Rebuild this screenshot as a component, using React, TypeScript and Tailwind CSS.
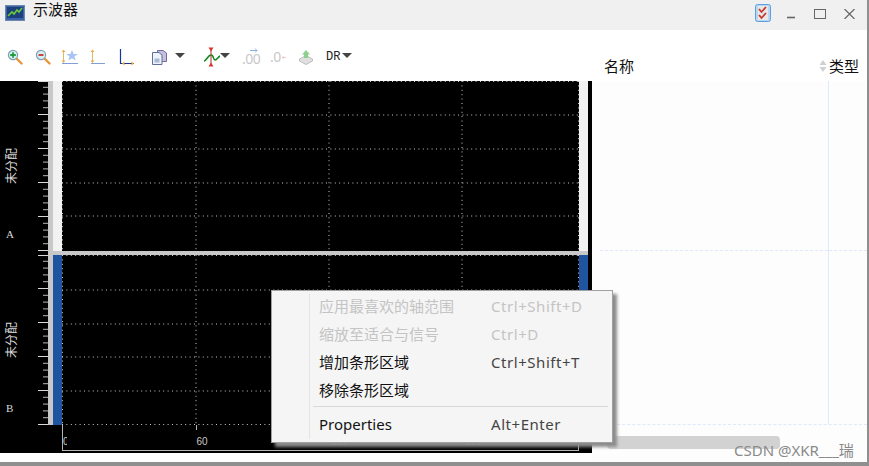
import React from 'react';

const CJK = "font-['Segoe_UI','Noto_Sans','Noto_Sans_CJK_SC',sans-serif]";

const Magnifier = ({ minus }: { minus?: boolean }) => (
    <svg width="16" height="16" viewBox="0 0 16 16">
        <path d="M9.5 9.5L14.5 14.5" stroke="#e8953a" strokeWidth="2.4" strokeLinecap="round" />
        <circle cx="6" cy="6" r="4.6" fill="#d8eef5" stroke="#7f9fae" strokeWidth="1.2" />
        {minus ? (
            <path d="M3.5 6H8.5" stroke="#c8322b" strokeWidth="1.8" />
        ) : (
            <path d="M3.2 6H8.8M6 3.2V8.8" stroke="#1f9e3c" strokeWidth="1.8" />
        )}
    </svg>
);

const AxisStar = () => (
    <svg width="18" height="16" viewBox="0 0 18 16">
        <path d="M2.5 1V13" stroke="#e5b765" strokeWidth="1" />
        <path d="M0.5 3L2.5 0.5L4.5 3ZM0.5 11.5L2.5 14L4.5 11.5Z" fill="#e9b04f" />
        <path d="M1 14.5H17" stroke="#7f9fd6" strokeWidth="1" />
        <path d="M11 1L12.6 5H16.8L13.4 7.6L14.7 11.6L11 9.2L7.3 11.6L8.6 7.6L5.2 5H9.4Z" fill="#a9c4f2" />
    </svg>
);

const AxisY = () => (
    <svg width="16" height="16" viewBox="0 0 16 16">
        <path d="M3.5 1V13" stroke="#e5b765" strokeWidth="1" />
        <path d="M1.5 3L3.5 0.5L5.5 3ZM1.5 11.5L3.5 14L5.5 11.5Z" fill="#e9b04f" />
        <path d="M2 14.5H16" stroke="#7f9fd6" strokeWidth="1" />
    </svg>
);

const AxisX = () => (
    <svg width="16" height="17" viewBox="0 0 16 17">
        <path d="M1.5 0V14.5H7" stroke="#17349c" strokeWidth="1.2" fill="none" />
        <path d="M4 14.5H15" stroke="#17349c" strokeWidth="1" />
        <path d="M5.5 12.5L3 14.5L5.5 16.5ZM12.5 12.5L15 14.5L12.5 16.5Z" fill="#e9a92c" />
    </svg>
);

const Copy = () => (
    <svg width="15" height="15" viewBox="0 0 15 15">
        <path d="M5.5 0.5H11L14.5 3V11.5H5.5Z" fill="#c6bfe0" stroke="#75689f" />
        <path d="M0.5 2.5H7L10 5V14.5H0.5Z" fill="#eef2fa" stroke="#5d7194" />
        <rect x="2.5" y="8.5" width="5" height="4" fill="#a9b9d4" />
    </svg>
);

const Caret = () => (
    <svg width="10" height="5" viewBox="0 0 10 5">
        <path d="M0 0H10L5 5Z" fill="#444" />
    </svg>
);

const Signal = () => (
    <svg width="16" height="20" viewBox="0 0 16 20">
        <path d="M0 14C3 13 4 8 7 8C10 8 9 13 11 13C13 13 14 10 16 9" stroke="#14861f" strokeWidth="1.6" fill="none" />
        <path d="M7 3V17" stroke="#a33" strokeWidth="1" />
        <path d="M4.5 0.5H9.5L7 4.5ZM4.5 19.5H9.5L7 15.5Z" fill="#d8342a" />
    </svg>
);

const Stack = () => (
    <svg width="14" height="15" viewBox="0 0 14 15">
        <path d="M0.5 9L7 5.5L13.5 9V11L7 14.5L0.5 11Z" fill="#e0e0e0" stroke="#bdbdbd" />
        <path d="M7 0L11 4.5H9V8H5V4.5H3Z" fill="#8fd08f" />
    </svg>
);

const Ruler = () => {
    const ticks = Array.from({ length: 26 }, (_, i) => i * 6.8);
    return (
        <svg width="10" height="170" viewBox="0 0 10 170" className="shrink-0">
            {ticks.map((t, i) => (
                <path
                    key={i}
                    d={`M${i % 5 === 0 ? 0 : 5} ${t - 0.5 + (i === 0 ? 1 : 0)}H10`}
                    stroke={i % 5 === 0 ? '#d8d8d8' : '#b8b8b8'}
                    strokeWidth="1"
                />
            ))}
        </svg>
    );
};

// grid lines sit at the same spots in both lanes, only offset vertically
const Grid = ({ rows }: { rows: number[] }) => (
    <svg width="517" height="170" viewBox="0 0 517 170" className="shrink-0">
        {rows.map((y) => (
            <path key={y} d={`M0 ${y}H517`} stroke="#c8c8c8" strokeWidth="1" strokeDasharray="1 3.4" />
        ))}
        {[0.5, 134, 267, 400, 516.5].map((x) => (
            <path key={x} d={`M${x} 0V170`} stroke="#c8c8c8" strokeWidth="1" strokeDasharray="1 3.4" />
        ))}
    </svg>
);

const Lane = ({ letter, strip, rows }: { letter: string; strip: string; rows: number[] }) => (
    <div className="flex h-[170px]">
        <div className="relative w-[38px] shrink-0 text-[12px] text-[#d8d8d8] font-['Noto_Sans_CJK_SC',sans-serif]">
            <span className="absolute -left-[9px] top-[75px] w-[40px] -rotate-90 whitespace-nowrap text-center leading-[20px]">未分配</span>
            <span className="absolute left-[6px] bottom-[11px] font-['Liberation_Serif',serif] text-[11px] leading-[12px]">{letter}</span>
        </div>
        <Ruler />
        <div className="w-[5px] shrink-0 bg-[#c8c8c8]" />
        <div className={`w-[9px] shrink-0 ${strip}`} />
        <Grid rows={rows} />
        <div className={`w-[9px] shrink-0 ${strip}`} />
    </div>
);

const AxisLabel = ({ text, width, indent }: { text: string; width: string; indent: string }) => (
    <span className={`relative pt-[12px] leading-none ${width} ${indent}`}>
        <span className="absolute left-0 top-0 h-[5px] w-px bg-[#b4b4b4]" />
        {text}
    </span>
);

const menuItems = [
    { label: '应用最喜欢的轴范围', keys: 'Ctrl+Shift+D', off: true },
    { label: '缩放至适合与信号', keys: 'Ctrl+D', off: true },
    { label: '增加条形区域', keys: 'Ctrl+Shift+T' },
    { label: '移除条形区域', keys: '' },
];

const MenuRow = ({ label, keys, off }: { label: string; keys: string; off?: boolean }) => (
    <div className={`flex h-[28px] items-center pl-[47px] text-[15px] ${off ? 'text-[#c4c4c4]' : 'text-[#111]'}`}>
        <span className="w-[172px] shrink-0">{label}</span>
        <span className={`tracking-[0.55px] ${off ? '' : 'text-[#444]'}`}>{keys}</span>
    </div>
);

export default function App() {
    return (
        <div className={`relative flex h-[466px] w-[869px] flex-col overflow-hidden border-r-2 border-b-4 border-[#8f8f8f] bg-white ${CJK}`}>
            {/* Title bar */}
            <div className="flex h-[30px] shrink-0 items-start bg-[#f0f0f0]">
                <svg width="20" height="16" viewBox="0 0 20 16" className="ml-[5px] mt-[5px]">
                    <rect x="0.5" y="0.5" width="19" height="15" fill="#3a64a8" stroke="#6d87b0" />
                    <rect x="2" y="2" width="16" height="11" fill="#1d3f7a" />
                    <path d="M3 11L7 7L9 9L12 5L14 7L17 3" stroke="#6ccb3c" strokeWidth="1.6" fill="none" />
                </svg>
                <span className="ml-[8px] mt-[1px] text-[15px] leading-[17px] text-[#111]">示波器</span>
                <svg width="16" height="18" viewBox="0 0 16 18" className="ml-auto mt-[4px]">
                    <rect x="0.5" y="0.5" width="15" height="17" rx="2" fill="#b9d6f2" stroke="#5da0dd" />
                    <rect x="3" y="2" width="10" height="14" fill="#e8e8e8" />
                    <path d="M4 5L6.5 8L11 3M4 11L6.5 14L11 9" stroke="#c9382d" strokeWidth="1.8" fill="none" />
                </svg>
                <svg width="10" height="10" viewBox="0 0 10 10" className="ml-[15px] mt-[9px]">
                    <path d="M1 8.5H9" stroke="#666" strokeWidth="1.6" />
                </svg>
                <svg width="12" height="10" viewBox="0 0 12 10" className="ml-[18px] mt-[9px]">
                    <rect x="0.5" y="0.5" width="11" height="9" fill="none" stroke="#666" />
                </svg>
                <svg width="11" height="10" viewBox="0 0 11 10" className="ml-[18px] mr-[12px] mt-[9px]">
                    <path d="M0.5 0L10.5 10M10.5 0L0.5 10" stroke="#666" strokeWidth="1.2" />
                </svg>
            </div>

            <div className="flex min-h-0 flex-1">
                {/* Left: toolbar and scope */}
                <div className="flex w-[592px] shrink-0 flex-col">
                    <div className="flex h-[51px] shrink-0 items-center pl-[7px] pt-[3px]">
                        <Magnifier />
                        <div className="ml-[12px]"><Magnifier minus /></div>
                        <div className="ml-[10px]"><AxisStar /></div>
                        <div className="ml-[10px]"><AxisY /></div>
                        <div className="ml-[14px]"><AxisX /></div>
                        <div className="ml-[17px]"><Copy /></div>
                        <div className="ml-[8px] mb-[3px]"><Caret /></div>
                        <div className="ml-[19px]"><Signal /></div>
                        <div className="mb-[3px]"><Caret /></div>
                        <div className="ml-[12px] flex w-[16px] flex-col items-end">
                            <svg width="8" height="5" viewBox="0 0 8 5" className="-mb-[1px]">
                                <path d="M0 2.5H7M5 0.5L7 2.5L5 4.5" stroke="#8fb0e6" strokeWidth="1" fill="none" />
                            </svg>
                            <span className="w-[16px] whitespace-nowrap text-[14px] leading-[14px] tracking-[-0.5px] text-[#c8c8c8]">.00</span>
                        </div>
                        <div className="ml-[12px] flex w-[16px] items-center">
                            <span className="text-[14px] leading-[14px] tracking-[-0.5px] text-[#c8c8c8]">.0</span>
                            <svg width="6" height="5" viewBox="0 0 6 5" className="ml-[1px]">
                                <path d="M6 2.5H0.5M2.5 0.5L0.5 2.5L2.5 4.5" stroke="#f2b0b0" strokeWidth="1" fill="none" />
                            </svg>
                        </div>
                        <div className="ml-[13px]"><Stack /></div>
                        <span className="ml-[13px] font-['Liberation_Mono',monospace] text-[12px] leading-none text-[#222]">DR</span>
                        <div className="ml-[2px] mb-[3px]"><Caret /></div>
                    </div>

                    <div className="flex-1 bg-black">
                        <Lane letter="A" strip="bg-[#f2f2f2]" rows={[0.5, 34, 68, 102, 135]} />
                        <div className="ml-[48px] h-[4px] w-[540px] bg-[#c8c8c8]" />
                        <Lane letter="B" strip="bg-[#1f559f]" rows={[0.5, 35, 69, 102, 136, 169.5]} />
                        <div className="ml-[62px] flex h-[26px] w-[517px] border-x border-b border-[#b4b4b4] font-['Liberation_Sans',sans-serif] text-[10px] text-[#c8c8c8]">
                            <span className="w-[134px] pt-[12px] leading-none"><span className="block w-[4px] overflow-hidden">0</span></span>
                            <AxisLabel text="60" width="w-[133px]" indent="pl-[0px]" />
                            <AxisLabel text="120" width="w-[133px]" indent="pl-[2px]" />
                            <AxisLabel text="180" width="w-[117px]" indent="pl-[3px]" />
                        </div>
                    </div>
                    <div className="h-[9px] shrink-0" />
                </div>

                {/* Right: signal table */}
                <div className="flex min-w-0 flex-1 flex-col bg-[#fdfdfd]">
                    <div className="flex h-[51px] shrink-0 items-center bg-white pt-[21px] text-[15px] text-[#111]">
                        <span className="ml-[12px]">名称</span>
                        <svg width="8" height="14" viewBox="0 0 8 14" className="ml-auto">
                            <path d="M4 1L7.5 6H0.5ZM4 13L7.5 8H0.5Z" fill="#d0d0d0" />
                        </svg>
                        <span className="ml-[2px] mr-[8px]">类型</span>
                    </div>
                    <div className="flex h-[344px] shrink-0 border-b border-dashed border-[#dfe9fb]">
                        <div className="flex w-[236px] shrink-0 flex-col">
                            <div className="ml-[8px] h-[170px] border-b border-dashed border-[#dfe9fb]" />
                        </div>
                        <div className="flex-1 border-l border-[#dfe9fb]">
                            <div className="h-[170px] border-b border-dashed border-[#dfe9fb]" />
                        </div>
                    </div>
                    <div className="ml-[15px] mt-[11px] h-[13px] w-[173px] rounded-[4px] bg-[#d2d2d2]" />
                </div>
            </div>

            {/* Context menu */}
            <div className="absolute left-[271px] top-[290px] h-[153px] w-[342px] border border-[#a0a0a0] bg-[#f5f5f5] py-[1px] shadow-[4px_4px_3px_#8c8c8c]">
                <div className="absolute bottom-[3px] left-[37px] top-[3px] w-px bg-[#e4e4e4]" />
                {menuItems.map((item) => (
                    <MenuRow key={item.label} {...item} />
                ))}
                <div className="ml-[41px] mr-[4px] mt-[2px] h-px bg-[#d8d8d8]" />
                <div className="mt-[3px]">
                    <MenuRow label="Properties" keys="Alt+Enter" />
                </div>
            </div>

            {/* Watermark */}
            <span className="absolute left-[734px] top-[441px] text-[15px] leading-[18px] text-[#8a8a8a]">CSDN @XKR___瑞</span>
        </div>
    );
}
